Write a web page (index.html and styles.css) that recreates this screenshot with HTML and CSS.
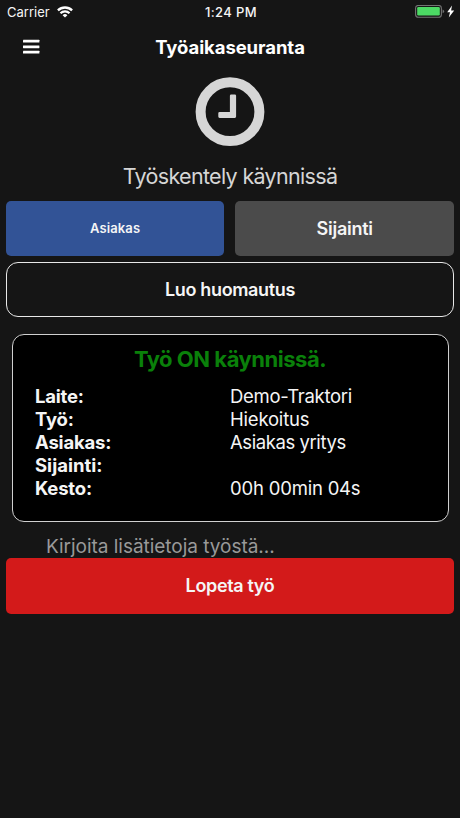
FILE: index.html
```
<!DOCTYPE html>
<html lang="fi">
<head>
<meta charset="utf-8">
<title>Työaikaseuranta</title>
<link rel="stylesheet" href="styles.css">
</head>
<body>
<div class="status">
  <div class="status-left"><span class="carrier">Carrier</span>
    <svg class="wifi" width="16" height="12" viewBox="0 0 16 12" fill="none" stroke="#fff" stroke-width="2.3"><path d="M.9 4.4a10.2 10.2 0 0 1 14.2 0"/><path d="M3.5 7.2a6.4 6.4 0 0 1 9 0"/><path d="M8 11.6L5.6 9.2a3.4 3.4 0 0 1 4.8 0z" fill="#fff" stroke="none"/></svg>
  </div>
  <span class="time">1:24 PM</span>
  <div class="status-right">
    <svg width="40" height="14" viewBox="0 0 40 14"><rect x=".6" y=".4" width="25.8" height="11.8" rx="2.8" fill="none" stroke="#737373" stroke-width="1.1"/><rect x="2.2" y="2" width="22.6" height="8.6" rx="1.3" fill="#4cd964"/><path d="M27.6 4.4q1.5.6 1.5 1.9t-1.5 1.9z" fill="#737373"/><path d="M37 .6L32.2 7.2h2.8l-1.2 5.3 5.4-7.1h-3.1z" fill="#fff"/></svg>
  </div>
</div>
<header class="nav">
  <svg class="menu" width="17" height="16" viewBox="0 0 17 16" fill="#fff"><rect y=".8" width="16.4" height="2.8" rx=".4"/><rect y="6.4" width="16.4" height="2.8" rx=".4"/><rect y="11.8" width="16.4" height="2.8" rx=".4"/></svg>
  <h1 class="title">Työaikaseuranta</h1>
</header>
<main>
  <section class="hero">
    <svg class="clock" width="70" height="70" viewBox="0 0 70 70"><circle cx="35" cy="34.7" r="29.4" fill="none" stroke="#d6d6d6" stroke-width="10"/><path d="M36.2 17.5h3.6q1.3 0 1.3 1.3v20.8q0 1.3-1.3 1.3H24.6q-1.3 0-1.3-1.3v-3.4q0-1.3 1.3-1.3h10.3V18.8q0-1.3 1.3-1.3z" fill="#d6d6d6"/></svg>
    <p class="state">Työskentely käynnissä</p>
  </section>
  <div class="pair">
    <button class="btn customer"><span>Asiakas</span></button>
    <button class="btn location"><span>Sijainti</span></button>
  </div>
  <button class="btn note"><span>Luo huomautus</span></button>
  <section class="card">
    <h2 class="card-title">Työ ON käynnissä.</h2>
    <dl class="details">
      <dt>Laite:</dt><dd class="device">Demo-Traktori</dd>
      <dt>Työ:</dt><dd>Hiekoitus</dd>
      <dt>Asiakas:</dt><dd class="client">Asiakas yritys</dd>
      <dt class="place">Sijainti:</dt><dd></dd>
      <dt>Kesto:</dt><dd>00h 00min 04s</dd>
    </dl>
  </section>
  <div class="extra">Kirjoita lisätietoja työstä...</div>
  <button class="btn stop"><span>Lopeta työ</span></button>
</main>
</body>
</html>
```
FILE: styles.css
```
* { box-sizing: border-box; }
body { margin: 0; height: 818px; background: #151515; color: #f5f5f5; font-family: Inter, "Liberation Sans", sans-serif; overflow: hidden; }
h1, h2, p, dl, dd { margin: 0; }
svg { display: block; }
.status { height: 24px; display: grid; grid-template-columns: 1fr auto 1fr; align-items: center; padding: 0 5px 0 7px; font-size: 13px; }
.status-left { display: flex; align-items: center; gap: 7px; }
.carrier { letter-spacing: 0; }
.time { font-weight: 500; letter-spacing: .4px; }
.status-right { display: flex; justify-content: flex-end; }
.nav { height: 46px; display: grid; grid-template-columns: 40px 1fr 40px; align-items: center; padding: 0 23px; }
.title { text-align: center; font-size: 18.5px; font-weight: 700; letter-spacing: -.08px; color: #fff; }
.hero { height: 130.5px; padding-top: 7px; display: flex; flex-direction: column; align-items: center; }
.state { margin-top: 15px; font-size: 21.5px; line-height: 28px; letter-spacing: -.67px; color: #d6d6d6; white-space: nowrap; }
.pair { display: grid; grid-template-columns: 218.3px 218.7px; gap: 11px; padding: 0 6px; }
.btn { display: flex; align-items: center; justify-content: center; height: 55.5px; border: 0; border-radius: 5px; font: 600 18px Inter, "Liberation Sans", sans-serif; color: #f5f5f5; letter-spacing: -.35px; padding: 0; }
.customer { background: #325396; font-size: 13px; letter-spacing: .1px; }
.location { background: #4b4b4b; letter-spacing: -.25px; }
.note { width: 448px; height: 55px; margin: 6px 6px 0; border: 1px solid #e8e8e8; border-radius: 12px; background: transparent; }
.card { margin: 17px 11.5px 0; height: 188px; border: 1px solid #d0d0d0; border-radius: 12px; background: #000; padding: 10px 22.5px 0; }
.card-title { color: #0a800a; text-align: center; font-size: 22px; line-height: 28px; font-weight: 700; letter-spacing: -.48px; }
.details { margin-top: 11.5px; display: grid; grid-template-columns: 195px 1fr; grid-auto-rows: 23.1px; font-size: 18.5px; line-height: 23px; letter-spacing: -.2px; }
dt { font-weight: 700; }
.place { letter-spacing: 0; }
.device { letter-spacing: -.28px; }
.client { letter-spacing: -.42px; }
.extra { height: 36px; overflow: hidden; padding: 12px 0 0 46px; font-size: 19px; line-height: 26px; color: #999; letter-spacing: -.03px; }
.stop { width: 448px; margin: 0 6px; background: #d31a1a; }
```
